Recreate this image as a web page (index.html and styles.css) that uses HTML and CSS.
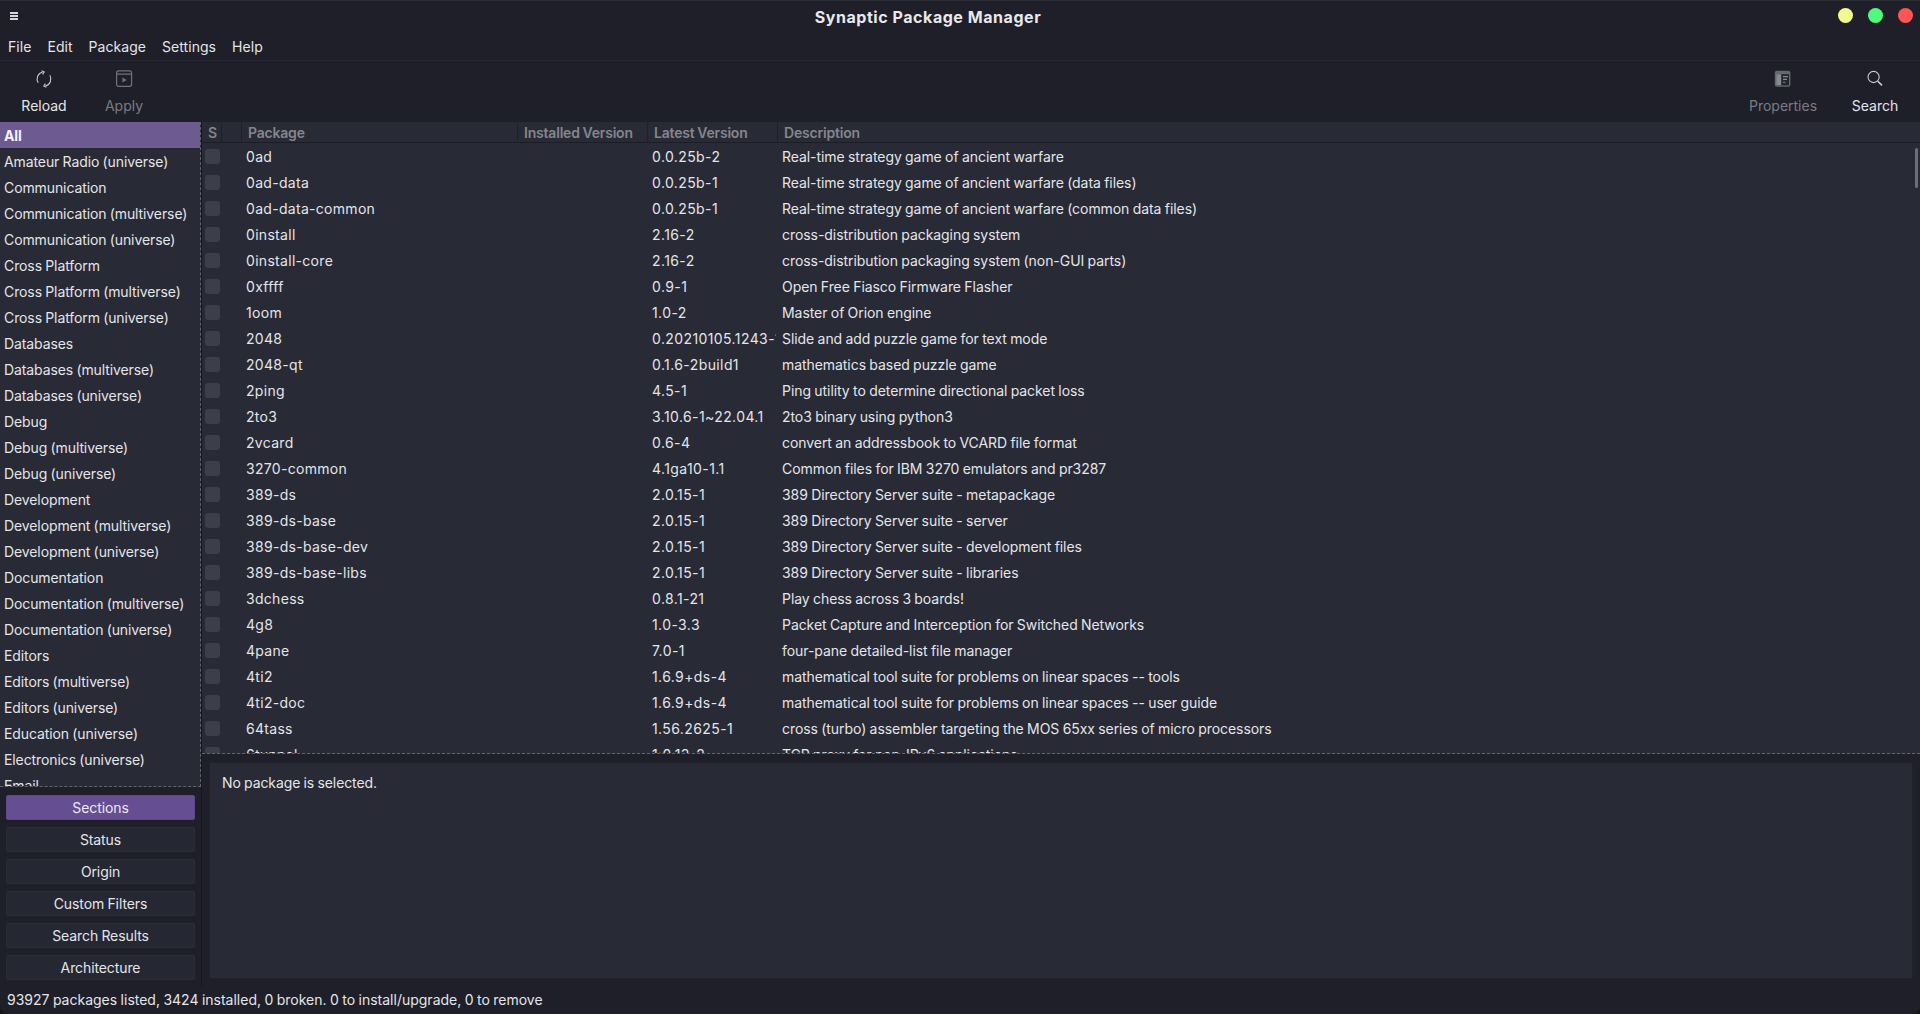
FILE: index.html
```html
<!doctype html>
<html>
<head>
    <meta charset="utf-8">
    <title>Synaptic Package Manager</title>
    <link rel="stylesheet" href="styles.css">
</head>

<body>
<div class="window">

    <div class="titlebar">
        <div class="hamburger"><span></span><span></span><span></span></div>
        <div class="title">Synaptic Package Manager</div>
        <div class="traffic">
            <span class="dot dot-yellow"></span>
            <span class="dot dot-green"></span>
            <span class="dot dot-red"></span>
        </div>
    </div>

    <div class="menubar">
        <span>File</span><span>Edit</span><span>Package</span><span>Settings</span><span>Help</span>
    </div>

    <div class="toolbar">
        <div class="tool tool-reload">
            <svg width="18" height="18" viewBox="0 0 18 18" fill="none" stroke="#c4c6cc" stroke-width="1.1">
                <path d="M3.2 12.8A7.2 7.2 0 0 1 7.6 2"/>
                <path d="M14.8 5.2A7.2 7.2 0 0 1 10.4 16"/>
                <path d="M6.6 .8 9.2 2 7.6 4.4"/>
                <path d="M11.4 17.2 8.8 16 10.4 13.6"/>
            </svg>
            <span>Reload</span>
        </div>
        <div class="tool tool-apply off">
            <svg width="18" height="18" viewBox="0 0 18 18" fill="none" stroke="#70727a" stroke-width="1.2">
                <rect x="1.6" y=".9" width="15" height="15.4" rx="2"/>
                <path d="M1.6 4.2H16.6"/>
                <path d="M7.4 7.4 11.6 10 7.4 12.6Z" fill="#70727a" stroke="none"/>
            </svg>
            <span>Apply</span>
        </div>
        <div class="spacer"></div>
        <div class="tool tool-props off">
            <svg width="18" height="18" viewBox="0 0 18 18">
                <rect x=".8" y=".8" width="15.6" height="16" rx="2" fill="#66686f"/>
                <rect x="2.2" y="4.2" width="12.8" height="11.2" fill="#24262f"/>
                <rect x="2.2" y="4.2" width="5" height="11.2" fill="#888a91"/>
                <path d="M9 6.6h5M9 9.4h4M9 12.2h2.4" stroke="#888a91" stroke-width="1.1"/>
            </svg>
            <span>Properties</span>
        </div>
        <div class="tool tool-search">
            <svg width="18" height="18" viewBox="0 0 18 18" fill="none" stroke="#c8cacf">
                <circle cx="7.6" cy="7" r="5.6" stroke-width="1.1"/>
                <path d="M11.8 11.2 16 15.4" stroke-width="1.6"/>
            </svg>
            <span>Search</span>
        </div>
    </div>

    <div class="main">
        <div class="sidebar">
            <div class="section-list" id="sections"></div>
            <div class="filter-buttons">
                <div class="filter-btn active">Sections</div>
                <div class="filter-btn">Status</div>
                <div class="filter-btn">Origin</div>
                <div class="filter-btn">Custom Filters</div>
                <div class="filter-btn">Search Results</div>
                <div class="filter-btn">Architecture</div>
            </div>
        </div>

        <div class="content">
            <div class="table-pane">
                <div class="thead">
                    <div class="th col-s">S</div>
                    <div class="th col-i"></div>
                    <div class="th col-pkg">Package</div>
                    <div class="th col-inst">Installed Version</div>
                    <div class="th col-last">Latest Version</div>
                    <div class="th col-desc">Description</div>
                </div>
                <div class="tbody" id="rows"></div>
                <div class="scroll-thumb"></div>
            </div>
            <div class="details-wrap">
                <div class="details">No package is selected.</div>
            </div>
        </div>
    </div>

    <div class="statusbar">93927 packages listed, 3424 installed, 0 broken. 0 to install/upgrade, 0 to remove</div>
</div>

<script type="text/javascript">
    var sections = ['All', 'Amateur Radio (universe)', 'Communication', 'Communication (multiverse)',
        'Communication (universe)', 'Cross Platform', 'Cross Platform (multiverse)', 'Cross Platform (universe)',
        'Databases', 'Databases (multiverse)', 'Databases (universe)', 'Debug', 'Debug (multiverse)',
        'Debug (universe)', 'Development', 'Development (multiverse)', 'Development (universe)', 'Documentation',
        'Documentation (multiverse)', 'Documentation (universe)', 'Editors', 'Editors (multiverse)',
        'Editors (universe)', 'Education (universe)', 'Electronics (universe)', 'Email'];

    var rows = [
        ['0ad', '0.0.25b-2', 'Real-time strategy game of ancient warfare'],
        ['0ad-data', '0.0.25b-1', 'Real-time strategy game of ancient warfare (data files)'],
        ['0ad-data-common', '0.0.25b-1', 'Real-time strategy game of ancient warfare (common data files)'],
        ['0install', '2.16-2', 'cross-distribution packaging system'],
        ['0install-core', '2.16-2', 'cross-distribution packaging system (non-GUI parts)'],
        ['0xffff', '0.9-1', 'Open Free Fiasco Firmware Flasher'],
        ['1oom', '1.0-2', 'Master of Orion engine'],
        ['2048', '0.20210105.1243-1', 'Slide and add puzzle game for text mode'],
        ['2048-qt', '0.1.6-2build1', 'mathematics based puzzle game'],
        ['2ping', '4.5-1', 'Ping utility to determine directional packet loss'],
        ['2to3', '3.10.6-1~22.04.1', '2to3 binary using python3'],
        ['2vcard', '0.6-4', 'convert an addressbook to VCARD file format'],
        ['3270-common', '4.1ga10-1.1', 'Common files for IBM 3270 emulators and pr3287'],
        ['389-ds', '2.0.15-1', '389 Directory Server suite - metapackage'],
        ['389-ds-base', '2.0.15-1', '389 Directory Server suite - server'],
        ['389-ds-base-dev', '2.0.15-1', '389 Directory Server suite - development files'],
        ['389-ds-base-libs', '2.0.15-1', '389 Directory Server suite - libraries'],
        ['3dchess', '0.8.1-21', 'Play chess across 3 boards!'],
        ['4g8', '1.0-3.3', 'Packet Capture and Interception for Switched Networks'],
        ['4pane', '7.0-1', 'four-pane detailed-list file manager'],
        ['4ti2', '1.6.9+ds-4', 'mathematical tool suite for problems on linear spaces -- tools'],
        ['4ti2-doc', '1.6.9+ds-4', 'mathematical tool suite for problems on linear spaces -- user guide'],
        ['64tass', '1.56.2625-1', 'cross (turbo) assembler targeting the MOS 65xx series of micro processors'],
        ['6tunnel', '1:0.13-2', 'TCP proxy for non-IPv6 applications']
    ];

    var sectionBox = document.getElementById('sections');
    sections.forEach(function (name, i) {
        var el = document.createElement('div');
        el.className = i === 0 ? 'section selected' : 'section';
        el.textContent = name;
        sectionBox.appendChild(el);
    });

    var rowBox = document.getElementById('rows');
    rows.forEach(function (r) {
        var el = document.createElement('div');
        el.className = 'row';
        el.innerHTML = '<div class="cell col-s"><span class="check"></span></div><div class="cell col-i"></div>' +
            '<div class="cell col-pkg">' + r[0] + '</div><div class="cell col-inst"></div>' +
            '<div class="cell col-last">' + r[1] + '</div><div class="cell col-desc">' + r[2] + '</div>';
        rowBox.appendChild(el);
    });
</script>
</body>
</html>
```

FILE: styles.css
```css
* {
    box-sizing: border-box;
}

html, body {
    margin: 0;
    height: 100%;
    background: #14151b;
}

body {
    font-family: "Inter", "Liberation Sans", sans-serif;
    font-size: 14px;
    letter-spacing: -.1px;
    word-spacing: -.5px;
    color: #e4e5e8;
    overflow: hidden;
}

.window {
    height: 1014px;
    display: flex;
    flex-direction: column;
    background: #1e1f29;
    border-top: 1px solid #2b2d37;
    border-radius: 0 0 8px 8px;
    overflow: hidden;
}

/* title bar */
.titlebar {
    height: 34px;
    display: flex;
    align-items: center;
    padding: 0 7px 0 10px;
}

.hamburger {
    width: 8px;
    display: flex;
    flex-direction: column;
    gap: 1px;
    margin-top: -4px;
}

.hamburger span {
    height: 2px;
    background: #d5d6da;
}

.title {
    flex: 1;
    text-align: center;
    font-weight: 700;
    font-size: 16px;
    letter-spacing: .55px;
    word-spacing: 0;
    color: #e8e9ec;
    margin-top: -2px;
}

.traffic {
    display: flex;
    gap: 15px;
    margin-top: -6px;
}

.dot {
    width: 15px;
    height: 15px;
    border-radius: 50%;
}

.dot-yellow { background: #f1fa8c; }
.dot-green { background: #50fa7b; }
.dot-red { background: #ff5555; }

/* menu + toolbar */
.menubar {
    height: 26px;
    display: flex;
    gap: 16px;
    align-items: center;
    padding: 0 0 2px 8px;
    letter-spacing: .05px;
    border-bottom: 1px solid #25262f;
}

.toolbar {
    height: 61px;
    display: flex;
}

.tool {
    display: flex;
    flex-direction: column;
    align-items: center;
    padding-top: 9px;
    gap: 9px;
    letter-spacing: 0;
}

.tool-reload { width: 88px; }
.tool-apply { width: 72px; }
.tool-props { width: 112px; }
.tool-search { width: 72px; margin-right: 9px; }

.tool.off {
    color: #7a7c83;
}

.spacer {
    flex: 1;
}

/* panes */
.main {
    flex: 1;
    min-height: 0;
    display: flex;
}

.sidebar {
    width: 202px;
    display: flex;
    flex-direction: column;
    border-right: 1px solid #16171e;
}

.section-list {
    height: 665px;
    overflow: hidden;
    background: #282a36;
    border-right: 1px dashed #62646c;
    border-bottom: 1px dashed #62646c;
}

.section {
    height: 26px;
    line-height: 26px;
    padding: 1px 0 0 4px;
    white-space: nowrap;
}

.section.selected {
    background: #6c5a90;
    font-weight: 700;
    color: #f4f2f8;
}

.filter-buttons {
    flex: 1;
    padding: 8px 6px 0;
    display: flex;
    flex-direction: column;
    gap: 7px;
}

.filter-btn {
    height: 25px;
    line-height: 23px;
    text-align: center;
    background: #252733;
    border: 1px solid #2a2c38;
    border-radius: 2px;
}

.filter-btn.active {
    background: #654e91;
    border-color: #5e4887;
    color: #eceaf2;
}

.content {
    flex: 1;
    min-width: 0;
    display: flex;
    flex-direction: column;
}

.table-pane {
    height: 632px;
    position: relative;
    overflow: hidden;
    background: #282a36;
    border-bottom: 1px dashed #62646c;
}

.thead, .row {
    display: flex;
}

.thead {
    height: 21px;
    background: #282a36;
    border-bottom: 1px solid #1c1d26;
    color: #85868c;
    font-weight: 600;
    letter-spacing: -.2px;
}

.th {
    line-height: 21px;
    border-right: 1px solid #1f2029;
    padding-left: 6px;
    white-space: nowrap;
    overflow: hidden;
}

.row {
    height: 26px;
}

.cell {
    line-height: 26px;
    padding: 1px 0 0 4px;
    white-space: nowrap;
    overflow: hidden;
}

.row .col-pkg {
    letter-spacing: .3px;
}

/* the long version string is cut just before the next column */
.row .col-last {
    width: 128px;
    margin-right: 2px;
    letter-spacing: .4px;
}

.row .col-desc {
    letter-spacing: -.06px;
}

.col-s { width: 20px; }
.col-i { width: 20px; }
.col-pkg { width: 276px; }
.col-inst { width: 130px; }
.col-last { width: 130px; }
.col-desc { flex: 1; border-right: 0; }

.row .col-s {
    padding: 6px 0 0 3px;
}

.check {
    display: block;
    width: 15px;
    height: 15px;
    background: #3c3e4a;
    border-radius: 3px;
}

.scroll-thumb {
    position: absolute;
    right: 2px;
    top: 26px;
    width: 3px;
    height: 40px;
    background: #6c6e76;
    border-radius: 2px;
}

.details-wrap {
    flex: 1;
    padding: 8px 7px 7px;
}

.details {
    height: 100%;
    padding: 11px 12px;
    background: #282a36;
    border: 1px solid #20212b;
}

.statusbar {
    height: 28px;
    line-height: 28px;
    padding-left: 7px;
    letter-spacing: 0;
}
```
